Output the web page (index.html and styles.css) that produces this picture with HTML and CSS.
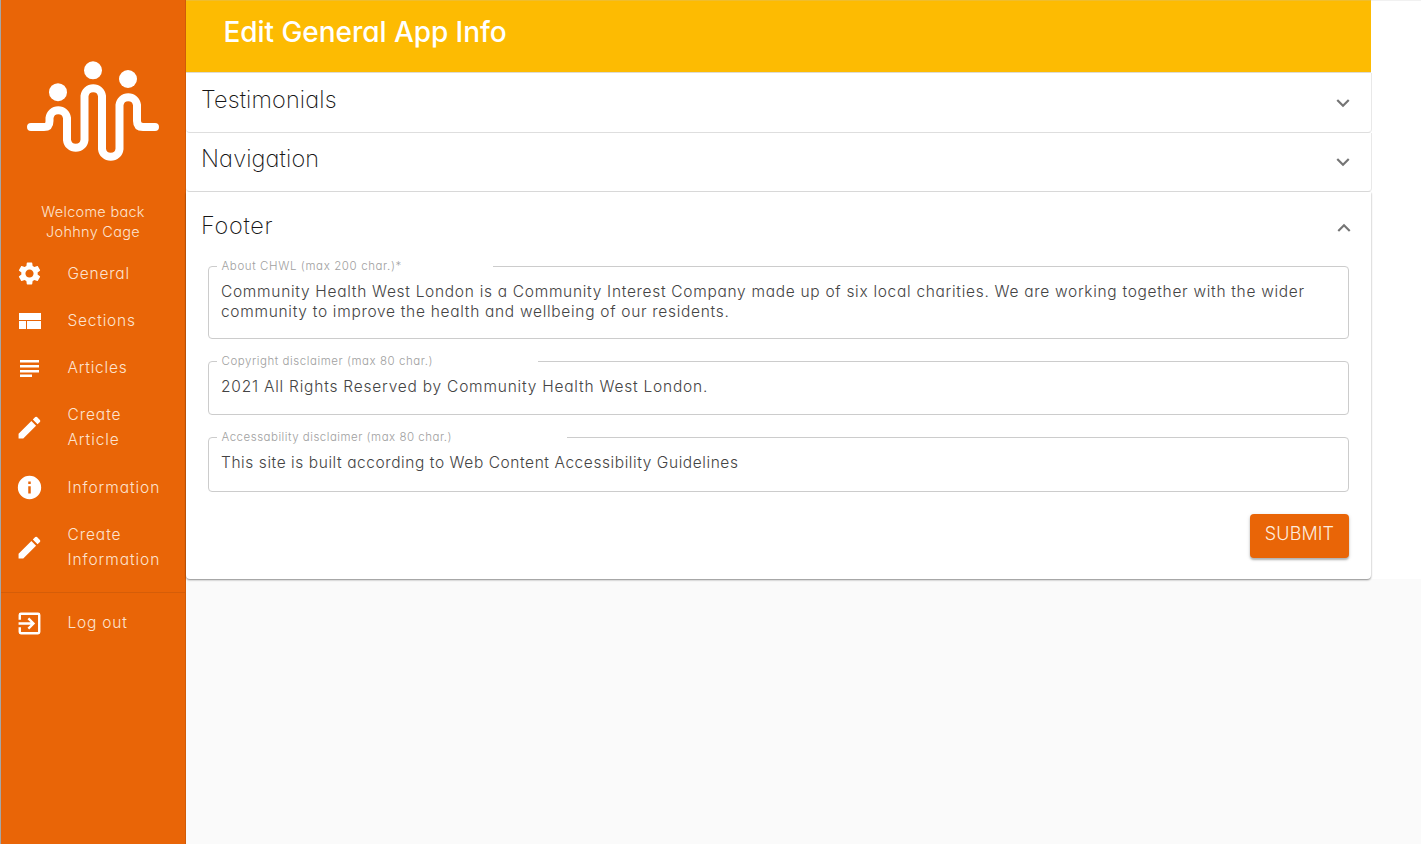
FILE: index.html
```
<!DOCTYPE html>
<html lang="en">
<head>
<meta charset="utf-8">
<title>Edit General App Info</title>
<link rel="stylesheet" href="styles.css">
</head>
<body>
<div class="app">
  <aside class="sidebar">
    <svg class="logo" viewBox="0 0 134 104" fill="none">
      <g fill="#fff"><circle cx="32" cy="32.200" r="9"/><circle cx="67" cy="10.300" r="9"/><circle cx="102" cy="19" r="9"/></g>
      <path d="M5 67H18Q23.500 67 23.500 61V58A8.800 8.800 0 0 1 41 58V80A8.800 8.800 0 0 0 58.500 80V36A8.800 8.800 0 0 1 76 36V89A8.800 8.800 0 0 0 93.500 89V45A8.800 8.800 0 0 1 111 45V61Q111 67 117 67H129" stroke="#fff" stroke-width="8" stroke-linecap="round"/>
    </svg>
    <p class="welcome">Welcome back<br>Johhny Cage</p>
    <nav class="menu">
      <a class="item"><svg class="icon" viewBox="1 1 22 22"><path d="M19.140 12.940c.04-.3.060-.61.060-.94 0-.32-.02-.64-.07-.94l2.030-1.580c.18-.14.230-.41.120-.61l-1.920-3.320c-.12-.22-.37-.29-.59-.22l-2.390.960c-.5-.38-1.030-.7-1.620-.94l-.36-2.540c-.04-.24-.24-.41-.48-.41h-3.840c-.24 0-.43.170-.47.410l-.36 2.540c-.59.240-1.130.570-1.620.940l-2.390-.96c-.22-.08-.47 0-.59.220L2.740 8.870c-.12.210-.08.470.120.610l2.030 1.580c-.05.3-.09.630-.09.940s.02.640.070.940l-2.030 1.580c-.18.140-.23.410-.12.610l1.920 3.320c.12.220.370.290.590.220l2.390-.96c.5.380 1.030.7 1.620.940l.36 2.540c.05.240.240.410.480.410h3.840c.24 0 .44-.17.470-.41l.36-2.540c.59-.24 1.130-.56 1.620-.94l2.390.960c.22.080.470 0 .59-.22l1.920-3.320c.12-.22.070-.47-.12-.61l-2.010-1.580zM12 15.600c-1.980 0-3.600-1.620-3.600-3.600s1.620-3.600 3.600-3.600 3.600 1.620 3.600 3.600-1.620 3.600-3.600 3.600z"/></svg><span>General</span></a>
      <a class="item"><svg class="icon lines" viewBox="0 0 25 25"><path d="M2 4h22v7H2zM2 12h7v8H2zM10 12h14v8H10z"/></svg><span>Sections</span></a>
      <a class="item"><svg class="icon lines" viewBox="0 0 25 25"><path d="M3 4h19v2.500H3zM3 9h19v2.500H3zM3 14h19v2.500H3zM3 18.500h12V21H3z"/></svg><span>Articles</span></a>
      <a class="item tall"><svg class="icon" viewBox="0 0 24 24"><path d="M1.500 18v4.500H6L18.300 10.200 13.800 5.700zM22 6.600a1.200 1.200 0 0 0 0-1.700L19.200 2a1.200 1.200 0 0 0-1.700 0l-2.300 2.300 4.500 4.500z"/></svg><span class="wide">Create Article</span></a>
      <a class="item"><svg class="icon" viewBox="0 0 24 24"><path fill-rule="evenodd" d="M12 .8a11.200 11.200 0 1 0 0 22.400A11.200 11.200 0 0 0 12 .8zM13.200 17.700h-2.400v-6.900h2.400zM13.200 8.600h-2.400V6.200h2.400z"/></svg><span class="wide">Information</span></a>
      <a class="item tall"><svg class="icon" viewBox="0 0 24 24"><path d="M1.500 18v4.500H6L18.300 10.200 13.800 5.700zM22 6.600a1.200 1.200 0 0 0 0-1.700L19.200 2a1.200 1.200 0 0 0-1.700 0l-2.300 2.300 4.500 4.500z"/></svg><span class="wide">Create Information</span></a>
      <hr class="rule">
      <a class="item"><svg class="icon lines" viewBox="0 0 24 24"><path d="M10.100 16.100l1.600 1.600L17.400 12l-5.700-5.700-1.600 1.600 3 3H1.500v2.200h11.600zM20.200 1.500H3.800a2.300 2.300 0 0 0-2.300 2.300v4.700h2.300V3.800h16.400v16.400H3.800v-4.700H1.500v4.700a2.300 2.300 0 0 0 2.300 2.300h16.400a2.300 2.300 0 0 0 2.300-2.300V3.800a2.300 2.300 0 0 0-2.300-2.300z"/></svg><span>Log out</span></a>
    </nav>
  </aside>
  <main class="main">
    <div class="content">
      <header class="title"><h1>Edit General App Info</h1></header>
      <section class="panel first"><h2>Testimonials</h2><svg class="chev" viewBox="0 0 24 24"><path d="M7.400 8.600 12 13.200l4.600-4.600L18 10l-6 6-6-6z"/></svg></section>
      <section class="panel"><h2>Navigation</h2><svg class="chev" viewBox="0 0 24 24"><path d="M7.400 8.600 12 13.200l4.600-4.600L18 10l-6 6-6-6z"/></svg></section>
      <section class="panel open">
        <div class="head"><h2 class="loose">Footer</h2><svg class="chev" viewBox="0 0 24 24"><path d="M12 8l-6 6 1.400 1.400L12 10.800l4.600 4.600L18 14z"/></svg></div>
        <form class="form">
          <fieldset class="field about"><legend>About CHWL (max 200 char.)*</legend><div class="value">Community Health West London is a Community Interest Company made up of six local charities. We are working together with the wider<br>community to improve the health and wellbeing of our residents.</div></fieldset>
          <fieldset class="field copyright"><legend>Copyright disclaimer (max 80 char.)</legend><div class="value">2021 All Rights Reserved by Community Health West London.</div></fieldset>
          <fieldset class="field access"><legend>Accessability disclaimer (max 80 char.)</legend><div class="value">This site is built according to Web Content Accessibility Guidelines</div></fieldset>
          <button class="submit" type="button">SUBMIT</button>
        </form>
      </section>
    </div>
  </main>
</div>
</body>
</html>
```
FILE: styles.css
```
* { box-sizing: border-box; }
body { margin: 0; background: #fafafa; font-family: Inter, Lato, sans-serif; font-weight: 300; font-feature-settings: "cv11" 1, "ss03" 1; color: #333; }
h1, h2, p { margin: 0; }
.app { display: flex; height: 844px; overflow: hidden; }
.sidebar { width: 186px; flex: none; background: #e96507; border-left: 1px solid #a6a6a6; border-right: 1px solid #d05b08; padding-top: 60px; color: #fff; }
.logo { display: block; width: 134px; height: 104px; margin-left: 25px; }
.welcome { margin-top: 38px; text-align: center; font-size: 14.500px; line-height: 20px; letter-spacing: .28px; color: #fde3cf; }
.menu { padding-top: 8px; }
.item { display: flex; align-items: center; height: 47px; padding-left: 16px; font-size: 15.500px; line-height: 25px; letter-spacing: .78px; color: #fde3cf; }
.item span { margin-left: 25.500px; width: 100px; }
.item .wide { letter-spacing: .93px; }
.tall { height: 73px; padding-bottom: 1px; }
.tall .icon { margin-top: 1px; }
.icon { width: 25px; height: 25px; flex: none; fill: #fff; }
.lines { margin-top: 1px; }
.rule { height: 1px; margin: 8px 0 6px; border: 0; background: #d55d08; }
.main { flex: 1; min-width: 0; }
.content { background: #fff; padding-right: 50px; height: 579px; border-top: 1px solid #f1f1f1; }
.title { height: 73px; margin-top: -1px; background: #fdbb02; border-top: 1px solid #efbd2e; border-bottom: 1px solid #dedbd2; padding: 14px 37.500px; }
h1 { font-size: 28px; line-height: 34px; font-weight: 500; letter-spacing: -.05px; color: #fff; }
h2 { font-size: 23.500px; line-height: 30px; font-weight: 200; letter-spacing: .12px; color: #161616; }
.loose { letter-spacing: .7px; }
.panel { display: flex; justify-content: space-between; height: 59px; padding: 11px 15px 0 15px; margin-right: -1px; border-radius: 0 0 4px 4px; border-right: 1px solid #e8e8e8; border-bottom: 1px solid #dedede; background: #fff; }
.first { height: 60px; padding-top: 12px; }
.chev { width: 26px; height: 26px; margin-top: 5px; fill: #757575; }
.open { display: block; height: 387px; margin-right: 0; padding-top: 19px; border-right: 0; border-bottom: 0; box-shadow: 0 1px 2px rgba(0,0,0,.45); }
.head { display: flex; justify-content: space-between; height: 48px; margin-right: -1px; }
.open .chev { margin-top: 4px; }
.form { display: flex; flex-direction: column; padding: 0 7px 0 7px; }
.field { margin: 0; border: 1px solid #ccc; border-radius: 4px; padding: 0 12px 0 8px; min-width: 0; }
.form { margin-right: 0; }
.field legend { padding: 0 0 0 4.500px; font-size: 11.500px; line-height: 14px; letter-spacing: .55px; color: #a0a0a0; }
.about { height: 80px; }
.about legend { width: 276px; letter-spacing: .61px; }
.copyright { height: 61px; margin-top: 15px; }
.copyright legend { width: 321px; }
.access { height: 62px; margin-top: 15px; }
.access legend { width: 350px; letter-spacing: .5px; }
.value { padding: 9px 0 0 4px; font-size: 15.500px; line-height: 20px; letter-spacing: .7px; white-space: nowrap; color: #444; }
.copyright .value { letter-spacing: .78px; }
.access .value { letter-spacing: .57px; }
.submit { align-self: flex-end; width: 99px; height: 44px; margin-top: 22px; padding: 0 0 5px; border: 0; border-radius: 4px; background: #e96507; color: #fdebdd; font: inherit; font-size: 18px; letter-spacing: .1px; box-shadow: 0 2px 2px rgba(0,0,0,.25), 0 1px 4px rgba(0,0,0,.12); }
```
